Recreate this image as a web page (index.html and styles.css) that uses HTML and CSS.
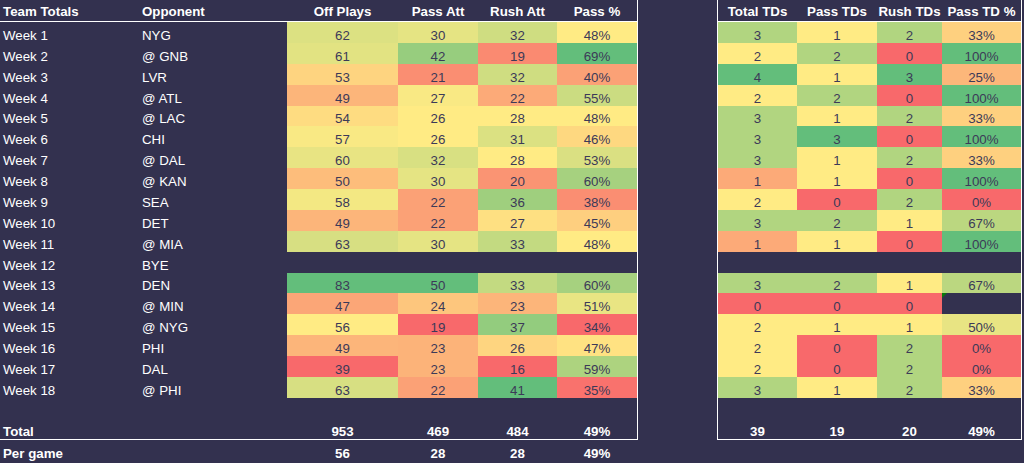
FILE: index.html
```html
<!DOCTYPE html>
<html lang="en">
<head>
<meta charset="utf-8">
<title>Team Totals</title>
<link rel="stylesheet" href="styles.css">
</head>
<body>
<div class="page">
  <section class="left">
    <div class="box box-left">
      <div class="row head">
        <div class="c lbl">Team Totals</div><div class="c lbl">Opponent</div><div class="c">Off Plays</div><div class="c">Pass Att</div><div class="c">Rush Att</div><div class="c">Pass %</div>
      </div>
      <div class="row"><div class="c lbl">Week 1</div><div class="c lbl">NYG</div><div class="c n" data-s="off">62</div><div class="c n" data-s="pa">30</div><div class="c n" data-s="ra">32</div><div class="c n" data-s="pp">48%</div></div>
      <div class="row"><div class="c lbl">Week 2</div><div class="c lbl">@ GNB</div><div class="c n" data-s="off">61</div><div class="c n" data-s="pa">42</div><div class="c n" data-s="ra">19</div><div class="c n" data-s="pp">69%</div></div>
      <div class="row"><div class="c lbl">Week 3</div><div class="c lbl">LVR</div><div class="c n" data-s="off">53</div><div class="c n" data-s="pa">21</div><div class="c n" data-s="ra">32</div><div class="c n" data-s="pp">40%</div></div>
      <div class="row"><div class="c lbl">Week 4</div><div class="c lbl">@ ATL</div><div class="c n" data-s="off">49</div><div class="c n" data-s="pa">27</div><div class="c n" data-s="ra">22</div><div class="c n" data-s="pp">55%</div></div>
      <div class="row"><div class="c lbl">Week 5</div><div class="c lbl">@ LAC</div><div class="c n" data-s="off">54</div><div class="c n" data-s="pa">26</div><div class="c n" data-s="ra">28</div><div class="c n" data-s="pp">48%</div></div>
      <div class="row"><div class="c lbl">Week 6</div><div class="c lbl">CHI</div><div class="c n" data-s="off">57</div><div class="c n" data-s="pa">26</div><div class="c n" data-s="ra">31</div><div class="c n" data-s="pp">46%</div></div>
      <div class="row"><div class="c lbl">Week 7</div><div class="c lbl">@ DAL</div><div class="c n" data-s="off">60</div><div class="c n" data-s="pa">32</div><div class="c n" data-s="ra">28</div><div class="c n" data-s="pp">53%</div></div>
      <div class="row"><div class="c lbl">Week 8</div><div class="c lbl">@ KAN</div><div class="c n" data-s="off">50</div><div class="c n" data-s="pa">30</div><div class="c n" data-s="ra">20</div><div class="c n" data-s="pp">60%</div></div>
      <div class="row"><div class="c lbl">Week 9</div><div class="c lbl">SEA</div><div class="c n" data-s="off">58</div><div class="c n" data-s="pa">22</div><div class="c n" data-s="ra">36</div><div class="c n" data-s="pp">38%</div></div>
      <div class="row"><div class="c lbl">Week 10</div><div class="c lbl">DET</div><div class="c n" data-s="off">49</div><div class="c n" data-s="pa">22</div><div class="c n" data-s="ra">27</div><div class="c n" data-s="pp">45%</div></div>
      <div class="row"><div class="c lbl">Week 11</div><div class="c lbl">@ MIA</div><div class="c n" data-s="off">63</div><div class="c n" data-s="pa">30</div><div class="c n" data-s="ra">33</div><div class="c n" data-s="pp">48%</div></div>
      <div class="row"><div class="c lbl">Week 12</div><div class="c lbl">BYE</div><div class="c"></div><div class="c"></div><div class="c"></div><div class="c"></div></div>
      <div class="row"><div class="c lbl">Week 13</div><div class="c lbl">DEN</div><div class="c n" data-s="off">83</div><div class="c n" data-s="pa">50</div><div class="c n" data-s="ra">33</div><div class="c n" data-s="pp">60%</div></div>
      <div class="row"><div class="c lbl">Week 14</div><div class="c lbl">@ MIN</div><div class="c n" data-s="off">47</div><div class="c n" data-s="pa">24</div><div class="c n" data-s="ra">23</div><div class="c n" data-s="pp">51%</div></div>
      <div class="row"><div class="c lbl">Week 15</div><div class="c lbl">@ NYG</div><div class="c n" data-s="off">56</div><div class="c n" data-s="pa">19</div><div class="c n" data-s="ra">37</div><div class="c n" data-s="pp">34%</div></div>
      <div class="row"><div class="c lbl">Week 16</div><div class="c lbl">PHI</div><div class="c n" data-s="off">49</div><div class="c n" data-s="pa">23</div><div class="c n" data-s="ra">26</div><div class="c n" data-s="pp">47%</div></div>
      <div class="row"><div class="c lbl">Week 17</div><div class="c lbl">DAL</div><div class="c n" data-s="off">39</div><div class="c n" data-s="pa">23</div><div class="c n" data-s="ra">16</div><div class="c n" data-s="pp">59%</div></div>
      <div class="row"><div class="c lbl">Week 18</div><div class="c lbl">@ PHI</div><div class="c n" data-s="off">63</div><div class="c n" data-s="pa">22</div><div class="c n" data-s="ra">41</div><div class="c n" data-s="pp">35%</div></div>
      <div class="row spacer"></div>
      <div class="row total"><div class="c lbl">Total</div><div class="c lbl"></div><div class="c">953</div><div class="c">469</div><div class="c">484</div><div class="c">49%</div></div>
    </div>
    <div class="row total pergame"><div class="c lbl">Per game</div><div class="c lbl"></div><div class="c">56</div><div class="c">28</div><div class="c">28</div><div class="c">49%</div></div>
  </section>

  <section class="box box-right">
    <div class="row head">
      <div class="c">Total TDs</div><div class="c">Pass TDs</div><div class="c">Rush TDs</div><div class="c">Pass TD %</div>
    </div>
    <div class="row"><div class="c n" data-s="tt">3</div><div class="c n" data-s="pt">1</div><div class="c n" data-s="rt">2</div><div class="c n" data-s="tp">33%</div></div>
    <div class="row"><div class="c n" data-s="tt">2</div><div class="c n" data-s="pt">2</div><div class="c n" data-s="rt">0</div><div class="c n" data-s="tp">100%</div></div>
    <div class="row"><div class="c n" data-s="tt">4</div><div class="c n" data-s="pt">1</div><div class="c n" data-s="rt">3</div><div class="c n" data-s="tp">25%</div></div>
    <div class="row"><div class="c n" data-s="tt">2</div><div class="c n" data-s="pt">2</div><div class="c n" data-s="rt">0</div><div class="c n" data-s="tp">100%</div></div>
    <div class="row"><div class="c n" data-s="tt">3</div><div class="c n" data-s="pt">1</div><div class="c n" data-s="rt">2</div><div class="c n" data-s="tp">33%</div></div>
    <div class="row"><div class="c n" data-s="tt">3</div><div class="c n" data-s="pt">3</div><div class="c n" data-s="rt">0</div><div class="c n" data-s="tp">100%</div></div>
    <div class="row"><div class="c n" data-s="tt">3</div><div class="c n" data-s="pt">1</div><div class="c n" data-s="rt">2</div><div class="c n" data-s="tp">33%</div></div>
    <div class="row"><div class="c n" data-s="tt">1</div><div class="c n" data-s="pt">1</div><div class="c n" data-s="rt">0</div><div class="c n" data-s="tp">100%</div></div>
    <div class="row"><div class="c n" data-s="tt">2</div><div class="c n" data-s="pt">0</div><div class="c n" data-s="rt">2</div><div class="c n" data-s="tp">0%</div></div>
    <div class="row"><div class="c n" data-s="tt">3</div><div class="c n" data-s="pt">2</div><div class="c n" data-s="rt">1</div><div class="c n" data-s="tp">67%</div></div>
    <div class="row"><div class="c n" data-s="tt">1</div><div class="c n" data-s="pt">1</div><div class="c n" data-s="rt">0</div><div class="c n" data-s="tp">100%</div></div>
    <div class="row"><div class="c"></div><div class="c"></div><div class="c"></div><div class="c"></div></div>
    <div class="row"><div class="c n" data-s="tt">3</div><div class="c n" data-s="pt">2</div><div class="c n" data-s="rt">1</div><div class="c n" data-s="tp">67%</div></div>
    <div class="row"><div class="c n" data-s="tt">0</div><div class="c n" data-s="pt">0</div><div class="c n" data-s="rt">0</div><div class="c err"><span class="flag"></span></div></div>
    <div class="row"><div class="c n" data-s="tt">2</div><div class="c n" data-s="pt">1</div><div class="c n" data-s="rt">1</div><div class="c n" data-s="tp">50%</div></div>
    <div class="row"><div class="c n" data-s="tt">2</div><div class="c n" data-s="pt">0</div><div class="c n" data-s="rt">2</div><div class="c n" data-s="tp">0%</div></div>
    <div class="row"><div class="c n" data-s="tt">2</div><div class="c n" data-s="pt">0</div><div class="c n" data-s="rt">2</div><div class="c n" data-s="tp">0%</div></div>
    <div class="row"><div class="c n" data-s="tt">3</div><div class="c n" data-s="pt">1</div><div class="c n" data-s="rt">2</div><div class="c n" data-s="tp">33%</div></div>
    <div class="row spacer"></div>
    <div class="row total"><div class="c">39</div><div class="c">19</div><div class="c">20</div><div class="c">49%</div></div>
  </section>
</div>
<script src="script.js"></script>
</body>
</html>
```

FILE: styles.css
```css
html, body {
  margin: 0;
  padding: 0;
  background: #33314f;
}

body {
  font-family: "Liberation Sans", Arial, sans-serif;
  font-size: 13.3px;
  color: #ffffff;
  width: 1024px;
  height: 463px;
  overflow: hidden;
}

.page {
  display: flex;
  align-items: flex-start;
}

.left {
  display: flex;
  flex-direction: column;
  --cols: 139px 148px 111px 80px 79px 80px;
}

.box-left {
  border-right: 1px solid #ffffff;
  border-bottom: 1px solid #ffffff;
}

.box-right {
  margin-left: 79px;
  border-left: 1px solid #ffffff;
  border-right: 1px solid #ffffff;
  border-bottom: 1px solid #ffffff;
  --cols: 79px 80px 65px 79px;
}

.row {
  display: grid;
  grid-template-columns: var(--cols);
  height: 20.89px;
}

.row.head {
  height: 21px;
  border-bottom: 1px solid #ffffff;
  font-weight: bold;
}

.row.spacer {
  height: 21px;
}

.row.total {
  height: 20px;
  font-weight: bold;
}

.row.pergame {
  height: 21px;
}

.c {
  position: relative;
  display: flex;
  align-items: flex-end;
  justify-content: center;
  white-space: nowrap;
  overflow: hidden;
  box-sizing: border-box;
}

.head .c {
  align-items: center;
  padding-top: 1px;
}

.c.lbl {
  justify-content: flex-start;
  padding-left: 3px;
}

.c.n {
  color: #3c3a58;
}

.flag {
  position: absolute;
  left: 0;
  top: 0;
  width: 0;
  height: 0;
  border-top: 5px solid #0b7a0b;
  border-right: 5px solid transparent;
}
```

FILE: script.js
```javascript
(function () {
  var RED = [248, 105, 107];
  var YEL = [255, 235, 132];
  var GRN = [99, 190, 123];

  function mix(a, b, t) {
    return 'rgb(' + a.map(function (v, i) {
      return Math.round(v + (b[i] - v) * t);
    }).join(',') + ')';
  }

  var groups = {};
  document.querySelectorAll('[data-s]').forEach(function (el) {
    var k = el.getAttribute('data-s');
    (groups[k] = groups[k] || []).push(el);
  });

  Object.keys(groups).forEach(function (k) {
    var els = groups[k];
    var vals = els.map(function (e) { return parseFloat(e.textContent); });
    var s = vals.slice().sort(function (a, b) { return a - b; });
    var min = s[0], max = s[s.length - 1];
    var pos = (s.length - 1) * 0.5;
    var lo = Math.floor(pos), hi = Math.ceil(pos);
    var mid = s[lo] + (s[hi] - s[lo]) * (pos - lo);
    els.forEach(function (el, i) {
      var v = vals[i], c;
      if (v <= mid) {
        c = mix(RED, YEL, mid === min ? 1 : (v - min) / (mid - min));
      } else {
        c = mix(YEL, GRN, max === mid ? 0 : (v - mid) / (max - mid));
      }
      el.style.backgroundColor = c;
    });
  });
})();
```
